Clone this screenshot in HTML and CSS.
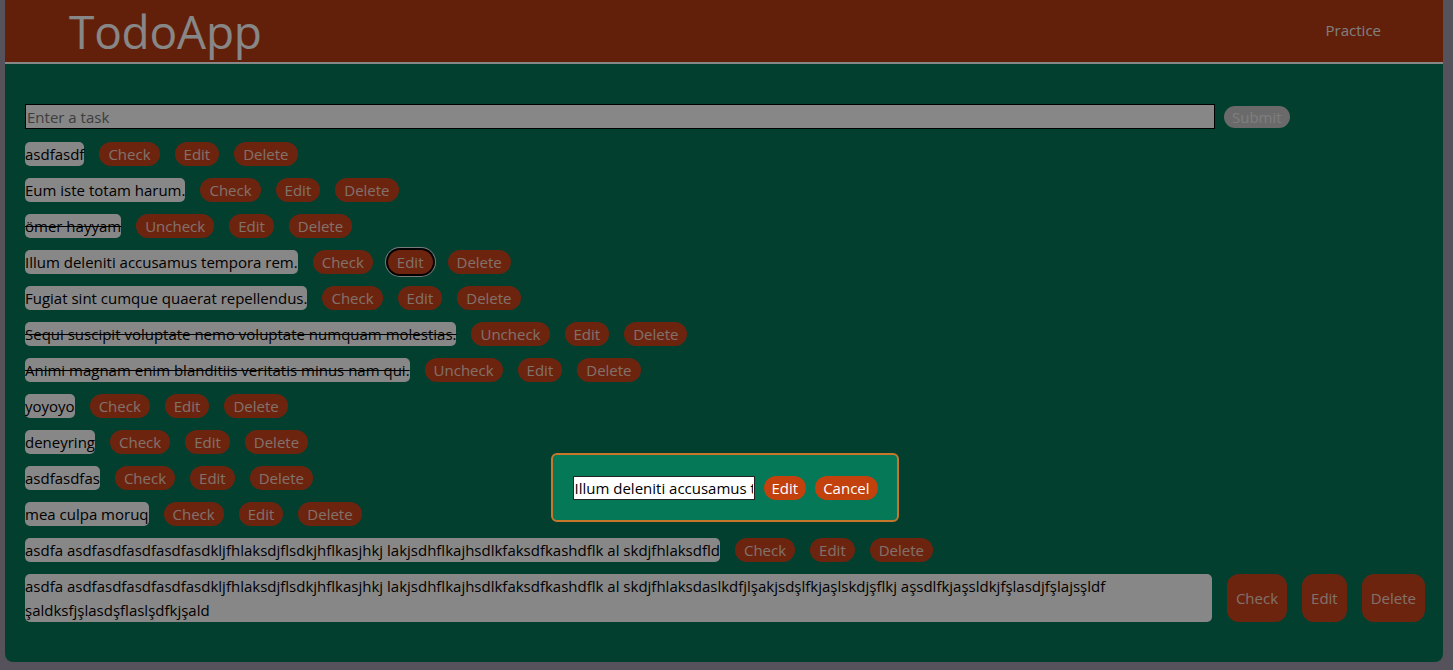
FILE: index.html
```html
<!DOCTYPE html>
<html lang="en">
<head>
<meta charset="utf-8">
<title>TodoApp</title>
<link rel="stylesheet" href="styles.css">
</head>
<body>
<div class="app">
  <header class="header">
    <h1 class="title">TodoApp</h1>
    <nav class="nav"><a class="nav-link" href="#">Practice</a></nav>
  </header>
  <main class="main">
    <form class="task-form">
      <input class="task-input" type="text" placeholder="Enter a task">
      <button class="submit-btn" type="button" disabled>Submit</button>
    </form>
    <ul class="todo-list">
      <li class="todo"><span class="todo-text">asdfasdf</span><button class="btn">Check</button><button class="btn">Edit</button><button class="btn">Delete</button></li>
      <li class="todo"><span class="todo-text">Eum iste totam harum.</span><button class="btn">Check</button><button class="btn">Edit</button><button class="btn">Delete</button></li>
      <li class="todo"><span class="todo-text done">ömer hayyam</span><button class="btn">Uncheck</button><button class="btn">Edit</button><button class="btn">Delete</button></li>
      <li class="todo"><span class="todo-text">Illum deleniti accusamus tempora rem.</span><button class="btn">Check</button><button class="btn focused">Edit</button><button class="btn">Delete</button></li>
      <li class="todo"><span class="todo-text">Fugiat sint cumque quaerat repellendus.</span><button class="btn">Check</button><button class="btn">Edit</button><button class="btn">Delete</button></li>
      <li class="todo"><span class="todo-text done">Sequi suscipit voluptate nemo voluptate numquam molestias.</span><button class="btn">Uncheck</button><button class="btn">Edit</button><button class="btn">Delete</button></li>
      <li class="todo"><span class="todo-text done">Animi magnam enim blanditiis veritatis minus nam qui.</span><button class="btn">Uncheck</button><button class="btn">Edit</button><button class="btn">Delete</button></li>
      <li class="todo"><span class="todo-text">yoyoyo</span><button class="btn">Check</button><button class="btn">Edit</button><button class="btn">Delete</button></li>
      <li class="todo"><span class="todo-text">deneyring</span><button class="btn">Check</button><button class="btn">Edit</button><button class="btn">Delete</button></li>
      <li class="todo"><span class="todo-text">asdfasdfas</span><button class="btn">Check</button><button class="btn">Edit</button><button class="btn">Delete</button></li>
      <li class="todo"><span class="todo-text">mea culpa moruq</span><button class="btn">Check</button><button class="btn">Edit</button><button class="btn">Delete</button></li>
      <li class="todo"><span class="todo-text">asdfa asdfasdfasdfasdfasdkljfhlaksdjflsdkjhflkasjhkj lakjsdhflkajhsdlkfaksdfkashdflk al skdjfhlaksdfld</span><button class="btn">Check</button><button class="btn">Edit</button><button class="btn">Delete</button></li>
      <li class="todo"><span class="todo-text">asdfa asdfasdfasdfasdfasdkljfhlaksdjflsdkjhflkasjhkj lakjsdhflkajhsdlkfaksdfkashdflk al skdjfhlaksdaslkdfjlşakjsdşlfkjaşlskdjşflkj aşsdlfkjaşsldkjfşlasdjfşlajsşldf şaldksfjşlasdşflaslşdfkjşald</span><button class="btn">Check</button><button class="btn">Edit</button><button class="btn">Delete</button></li>
    </ul>
  </main>
</div>
<div class="overlay"></div>
<div class="modal">
  <input class="modal-input" type="text" value="Illum deleniti accusamus tempora rem.">
  <button class="modal-btn">Edit</button>
  <button class="modal-btn">Cancel</button>
</div>
</body>
</html>
```
FILE: styles.css
```css
* { box-sizing: border-box; }

body {
  margin: 0;
  background: #a29bae;
  font-family: "Open Sans", "Noto Sans", sans-serif;
  font-size: 15px;
  color: #000;
}

.app {
  margin: 0 10px 8px 5px;
  background: #047857;
  border-radius: 0 0 8px 8px;
}

.header {
  height: 64px;
  background: #b93c13;
  border-bottom: 2px solid #ffffff;
  display: flex;
  align-items: center;
  justify-content: space-between;
  padding: 0 62px 0 64px;
}

.title {
  margin: 0;
  font-size: 46px;
  font-weight: 400;
  line-height: 1;
  color: #ffffff;
  letter-spacing: -0.2px;
}

.nav-link {
  color: #f4efec;
  text-decoration: none;
  font-size: 15px;
  line-height: 20px;
  display: block;
  margin-bottom: 2px;
}

.main {
  padding: 40px 18px 40px 20px;
}

.task-form {
  display: flex;
  align-items: center;
  gap: 9px;
  margin: 0 0 13px;
}

.task-input {
  width: 85%;
  height: 25px;
  border: 1px solid #000;
  background: #fff;
  font-family: inherit;
  font-size: 15px;
  padding: 0 1px;
  margin: 0;
}

.task-input::placeholder { color: #757575; }

.submit-btn {
  height: 22px;
  padding: 0 8px;
  border: none;
  border-radius: 11px;
  background: #c9c9c9;
  color: #ededed;
  font-family: inherit;
  font-size: 15px;
  line-height: 22px;
}

.todo-list {
  list-style: none;
  margin: 0;
  padding: 0;
  display: flex;
  flex-direction: column;
  gap: 12px;
}

.todo {
  display: flex;
  align-items: stretch;
  gap: 15px;
}

.todo-text {
  background: #fff;
  color: #000;
  border-radius: 5px;
  line-height: 24px;
  flex: 0 1 auto;
  min-width: 0;
}

.todo-text.done { text-decoration: line-through; }

.btn {
  flex: 0 0 auto;
  border: none;
  border-radius: 12px;
  background: #cf441e;
  color: #f3d6c8;
  font-family: inherit;
  font-size: 15px;
  line-height: 24px;
  padding: 0 9px;
  margin: 0;
}

.btn.focused {
  box-shadow: 0 0 0 2px #000, 0 0 0 3px #e6e6e6;
}

.overlay {
  position: fixed;
  inset: 0;
  background: rgba(0, 0, 0, 0.47);
}

.modal {
  position: fixed;
  top: 453px;
  left: 50%;
  margin-left: -176px;
  width: 348px;
  height: 69px;
  background: #047857;
  border: 2px solid #c8772a;
  border-radius: 6px;
  padding: 0 19px 0 20px;
  display: flex;
  align-items: center;
  gap: 9px;
}

.modal-input {
  width: 182px;
  height: 24px;
  border: 1px solid #222;
  background: #fff;
  color: #000;
  font-family: inherit;
  font-size: 15px;
  padding: 0 1px;
  margin: 0;
}

.modal-btn {
  border: none;
  border-radius: 12px;
  background: #c2410c;
  color: #fff;
  font-family: inherit;
  font-size: 15px;
  line-height: 24px;
  padding: 0 8px;
  margin: 0;
}
```
